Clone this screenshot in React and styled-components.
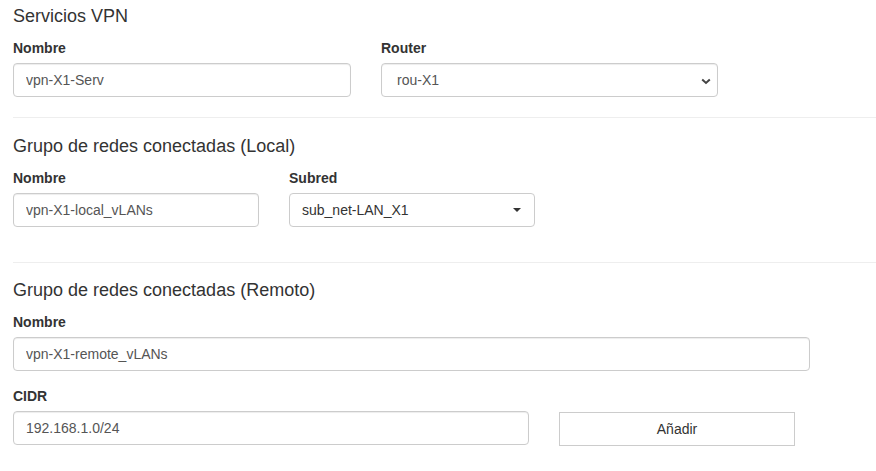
import React from "react";
import styled, { createGlobalStyle } from "styled-components";

const Global = createGlobalStyle`
  html, body { margin: 0; padding: 0; background: #fff; }
  body { font-family: "Liberation Sans", Arial, sans-serif; font-size: 14px; color: #333; }
  * { box-sizing: border-box; }
`;

const Page = styled.div`
  padding: 6px 0 0 13px;
`;

const Title = styled.h4`
  margin: ${(p) => p.$top || 0}px 0 12px 0;
  font-size: 18px;
  font-weight: 400;
  line-height: 20px;
  color: #333;
`;

const Divider = styled.hr`
  margin: ${(p) => p.$top}px 0 0 0;
  border: 0;
  border-top: 1px solid #eee;
  height: 0;
`;

const Row = styled.div`
  display: grid;
  grid-template-columns: ${(p) => p.$cols};
  column-gap: 30px;
  align-items: start;
  margin-bottom: ${(p) => p.$mb || 0}px;
`;

const Field = styled.div`
  display: flex;
  flex-direction: column;
`;

const Label = styled.label`
  display: block;
  font-size: 14px;
  font-weight: 700;
  line-height: 20px;
  margin-bottom: 5px;
  color: #333;
`;

const Input = styled.input`
  display: block;
  width: 100%;
  height: 34px;
  padding: 6px 12px;
  font-family: inherit;
  font-size: 14px;
  line-height: 20px;
  color: #555;
  background: #fff;
  border: 1px solid #ccc;
  border-radius: 4px;
  box-shadow: inset 0 1px 1px rgba(0, 0, 0, 0.075);
  outline: none;
`;

const SelectWrap = styled.div`
  position: relative;
  width: 100%;
`;

const Select = styled.select`
  display: block;
  width: 100%;
  height: 34px;
  padding: 0 24px 0 15px;
  font-family: inherit;
  font-size: 14px;
  color: #555;
  background: #fff;
  border: 1px solid #ccc;
  border-radius: 4px;
  box-shadow: inset 0 1px 1px rgba(0, 0, 0, 0.075);
  appearance: none;
  -webkit-appearance: none;
  outline: none;
`;

const Chevron = styled.svg`
  position: absolute;
  right: 7px;
  top: 15px;
  pointer-events: none;
`;

const DropButton = styled.button`
  display: flex;
  align-items: center;
  justify-content: space-between;
  width: 100%;
  height: 34px;
  padding: 0 13px 0 12px;
  font-family: inherit;
  font-size: 14px;
  color: #333;
  background: #fff;
  border: 1px solid #ccc;
  border-radius: 4px;
  text-align: left;
`;

const Caret = styled.span`
  display: inline-block;
  width: 0;
  height: 0;
  border-left: 4px solid transparent;
  border-right: 4px solid transparent;
  border-top: 4px solid #333;
`;

const AddButton = styled.button`
  display: block;
  width: 100%;
  height: 34px;
  margin-top: 26px;
  font-family: inherit;
  font-size: 14px;
  color: #333;
  background: #fff;
  border: 1px solid #ccc;
  border-radius: 0;
`;

export default function App() {
  return (
    <>
      <Global />
      <Page>
        <Title>Servicios VPN</Title>
        <Row $cols="338px 337px">
          <Field>
            <Label>Nombre</Label>
            <Input defaultValue="vpn-X1-Serv" />
          </Field>
          <Field>
            <Label>Router</Label>
            <SelectWrap>
              <Select defaultValue="rou-X1">
                <option>rou-X1</option>
              </Select>
              <Chevron width="10" height="7" viewBox="0 0 10 7">
                <path d="M1.2 1.5 L5 5 L8.8 1.5" fill="none" stroke="#444" strokeWidth="2" />
              </Chevron>
            </SelectWrap>
          </Field>
        </Row>

        <Divider $top={20} />

        <Title $top={18}>Grupo de redes conectadas (Local)</Title>
        <Row $cols="246px 246px">
          <Field>
            <Label>Nombre</Label>
            <Input defaultValue="vpn-X1-local_vLANs" />
          </Field>
          <Field>
            <Label>Subred</Label>
            <DropButton type="button">
              <span>sub_net-LAN_X1</span>
              <Caret />
            </DropButton>
          </Field>
        </Row>

        <Divider $top={35} />

        <Title $top={17}>Grupo de redes conectadas (Remoto)</Title>
        <Row $cols="797px" $mb={15}>
          <Field>
            <Label>Nombre</Label>
            <Input defaultValue="vpn-X1-remote_vLANs" />
          </Field>
        </Row>
        <Row $cols="516px 236px">
          <Field>
            <Label>CIDR</Label>
            <Input defaultValue="192.168.1.0/24" />
          </Field>
          <AddButton type="button">Añadir</AddButton>
        </Row>
      </Page>
    </>
  );
}
